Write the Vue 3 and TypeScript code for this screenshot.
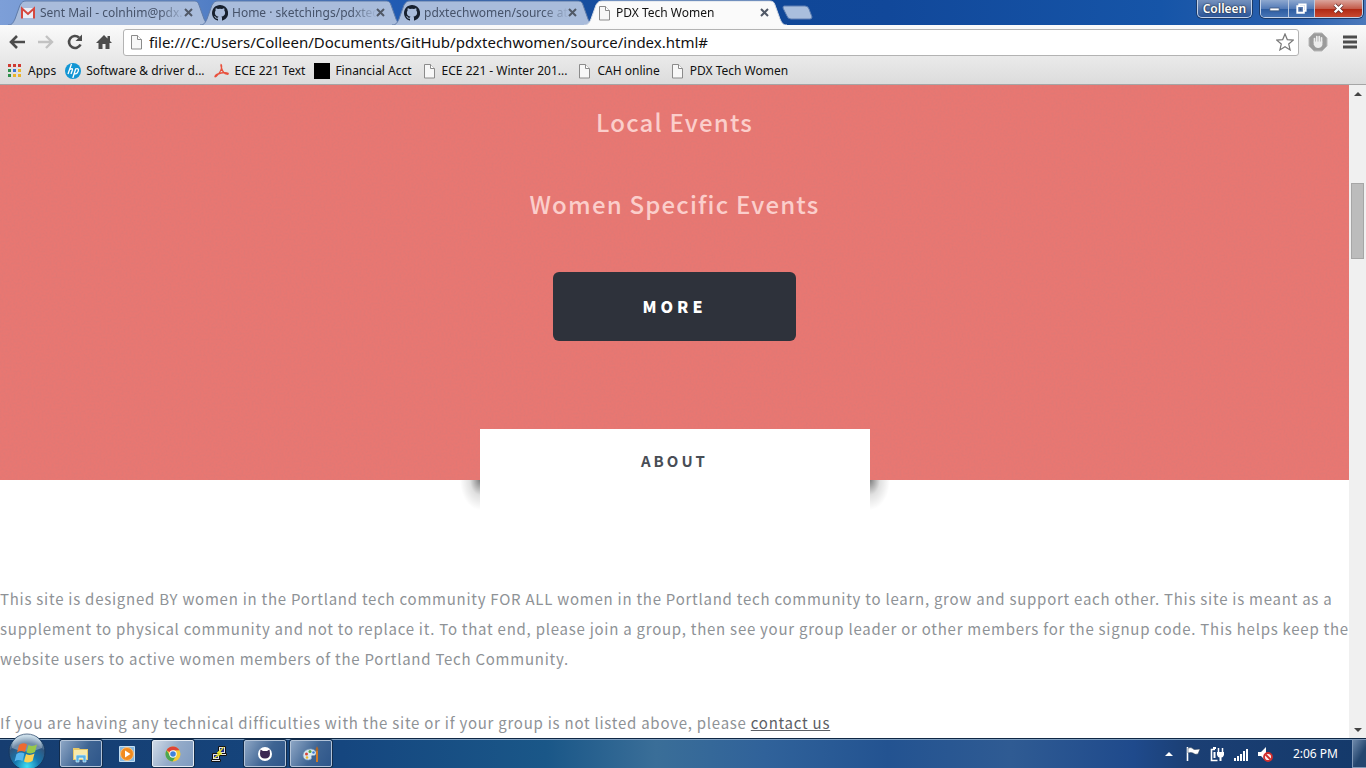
<script setup lang="ts">
import { ref } from 'vue'

interface Tab { title: string; icon: 'gmail' | 'github' | 'page'; active: boolean }
interface Bookmark { title: string; icon: 'apps' | 'hp' | 'pdf' | 'black' | 'page' }
interface Task { name: string; state: 'open' | 'current' | 'pinned' }

const tabs: Tab[] = [
  { title: 'Sent Mail - colnhim@pdx.', icon: 'gmail', active: false },
  { title: 'Home · sketchings/pdxtec', icon: 'github', active: false },
  { title: 'pdxtechwomen/source at', icon: 'github', active: false },
  { title: 'PDX Tech Women', icon: 'page', active: true },
]

const bookmarks: Bookmark[] = [
  { title: 'Apps', icon: 'apps' },
  { title: 'Software & driver d...', icon: 'hp' },
  { title: 'ECE 221 Text', icon: 'pdf' },
  { title: 'Financial Acct', icon: 'black' },
  { title: 'ECE 221 - Winter 201...', icon: 'page' },
  { title: 'CAH online', icon: 'page' },
  { title: 'PDX Tech Women', icon: 'page' },
]

const tasks: Task[] = [
  { name: 'Explorer', state: 'open' },
  { name: 'Media Player', state: 'pinned' },
  { name: 'Chrome', state: 'current' },
  { name: 'PuTTY', state: 'pinned' },
  { name: 'GitHub', state: 'open' },
  { name: 'Paint', state: 'open' },
]

const address = ref('file:///C:/Users/Colleen/Documents/GitHub/pdxtechwomen/source/index.html#')
</script>

<template>
  <div class="desktop">
    <svg class="defs" width="0" height="0" aria-hidden="true">
      <defs>
        <symbol id="page" viewBox="0 0 16 16">
          <path d="M3.5 1.5h6l4 4v9.500h-10z" fill="#f7f7f7" stroke="#8b8b8b" />
          <path d="M9.500 1.500v4h4" fill="#fff" stroke="#8b8b8b" />
        </symbol>
        <symbol id="github" viewBox="0 0 16 16">
          <path fill="#17202e" d="M8 0C3.600 0 0 3.600 0 8c0 3.500 2.300 6.500 5.500 7.600.4.100.5-.2.500-.4v-1.500c-2.200.5-2.700-.9-2.700-.9-.4-.9-.9-1.200-.9-1.200-.7-.5.100-.5.100-.5.800.100 1.200.8 1.200.8.700 1.200 1.900.9 2.300.7.100-.5.300-.9.500-1.100-1.800-.2-3.600-.9-3.600-4 0-.9.300-1.600.8-2.100-.1-.2-.4-1 .1-2.100 0 0 .7-.2 2.200.8a7.600 7.600 0 0 1 4 0c1.500-1 2.200-.8 2.200-.8.400 1.100.2 1.900.1 2.100.5.600.8 1.300.8 2.100 0 3.100-1.900 3.800-3.700 4 .3.300.6.800.6 1.500v2.200c0 .2.100.5.600.4A8 8 0 0 0 8 0z" />
        </symbol>
        <symbol id="gmail" viewBox="0 0 16 16">
          <path d="M2 3h12v10H2z" fill="#e9edf5" />
          <path d="M2 13.500v-10L8 9l6-5.500v10" fill="none" stroke="#d5483f" stroke-width="2" />
        </symbol>
        <symbol id="apps" viewBox="0 0 16 16">
          <path fill="#cf3b32" d="M1 1h3v3H1zM6 1h3v3H6zM11 1h3v3h-3z" />
          <path fill="#2f8f4b" d="M1 6h3v3H1zM1 11h3v3H1z" />
          <path fill="#3a74d8" d="M6 6h3v3H6z" />
          <path fill="#eab42c" d="M11 6h3v3h-3zM6 11h3v3H6zM11 11h3v3h-3z" />
        </symbol>
        <symbol id="hp" viewBox="0 0 16 16">
          <circle cx="8" cy="8" r="8" fill="#1296d4" />
          <path d="M6.500 1 3 11M5 6.500q3-2 2.300.7L6 11M10.800 5.500 7.800 15M10.500 6q4-1.200 2.600 2.500-1.200 3-3.800 2.200" fill="none" stroke="#fff" stroke-width="1.300" />
        </symbol>
        <symbol id="pdf" viewBox="0 0 16 16">
          <path d="M6.500 1.500q1.500 0 1 3.500-.7 4-5.500 8.500-1.200.8-1-.2 1-2 6-3.300 5-1 7 .2.800 1.200-1 1-4-.8-5.500-6.200-.8-3.500-1-3.500z" fill="none" stroke="#e8503c" stroke-width="1.300" />
        </symbol>
        <symbol id="black" viewBox="0 0 16 16"><path d="M0 0h16v16H0z" /></symbol>
      </defs>
    </svg>

    <header class="browser">
      <div class="titlebar">
        <div class="tabs">
          <div v-for="(tab, i) in tabs" :key="i" class="tab" :class="{ active: tab.active }">
            <svg class="tab-shape" viewBox="0 0 203 25" preserveAspectRatio="none" aria-hidden="true">
              <path d="M0 25C4 25 5 23 7 19L12 5C14 2 15 1 18 1H185C189 1 190 2 191 5L196 19C198 23 199 25 203 25" />
            </svg>
            <svg class="icon"><use :href="'#' + tab.icon" /></svg>
            <button class="tab-title">{{ tab.title }}</button>
            <button class="tab-close" aria-label="Close tab">
              <svg viewBox="0 0 9 9"><path d="M1 1l7 7M8 1L1 8" /></svg>
            </button>
          </div>
          <button class="new-tab" aria-label="New tab">
            <svg viewBox="0 0 32 15"><path d="M2 1H23Q26 1 27 4L30 12Q30 14 28 14H9Q6 14 5 11L1 3Q1 1 2 1Z" /></svg>
          </button>
        </div>
        <button class="user">Colleen</button>
        <div class="window-buttons">
          <button aria-label="Minimize"><svg viewBox="0 0 16 16"><path d="M3 7.500h10v3H3z" fill="#fff" stroke="#3b5277" stroke-width=".8" /></svg></button>
          <button aria-label="Restore"><svg viewBox="0 0 16 16"><path d="M5.500 3.500h7v7h-7z" fill="none" stroke="#fff" stroke-width="1.800" /><path d="M3.500 5.500h7v7h-7z" fill="#5677ae" stroke="#fff" stroke-width="2" /><path d="M6 8h2v2H6z" fill="#31507f" /></svg></button>
          <button class="close" aria-label="Close"><svg viewBox="0 0 16 16"><path d="M4 4l8 8M12 4l-8 8" stroke="#5b2626" stroke-width="4" /><path d="M4 4l8 8M12 4l-8 8" stroke="#fff" stroke-width="2.600" /></svg></button>
        </div>
      </div>

      <div class="toolbar">
        <button class="nav" aria-label="Back"><svg viewBox="0 0 18 18"><path d="M17 9H4M9 3 3 9l6 6" stroke="#4c4c4c" stroke-width="2.600" fill="none" /></svg></button>
        <button class="nav" aria-label="Forward"><svg viewBox="0 0 18 18"><path d="M1 9h13M9 3l6 6-6 6" stroke="#c2c2c2" stroke-width="2.400" fill="none" /></svg></button>
        <button class="nav" aria-label="Reload"><svg viewBox="0 0 18 18"><path d="M14.500 11.500A6 6 0 1 1 13 4.500" stroke="#4c4c4c" stroke-width="2.600" fill="none" /><path d="M16 1.500V8H9.500z" fill="#4c4c4c" /></svg></button>
        <button class="nav" aria-label="Home"><svg viewBox="0 0 18 18"><path d="M9 2 1 10h2.500v6h4v-5h3v5h4v-6H17l-2-2V3h-2.500v2.500z" fill="#4c4c4c" /></svg></button>
        <div class="omnibox">
          <svg class="icon"><use href="#page" /></svg>
          <input v-model="address" type="text" aria-label="Address" spellcheck="false" />
          <button class="star" aria-label="Bookmark this page"><svg viewBox="0 0 18 18"><path d="M9 1l2.300 5.600 5.900.5-4.500 3.900 1.400 5.900L9 13.700l-5.100 3.200L5.300 11 .8 7.100l5.900-.5z" fill="#fff" stroke="#777" stroke-width="1.200" /></svg></button>
        </div>
        <button class="ext" aria-label="Ad blocker"><svg viewBox="0 0 20 20"><path d="M6 1h8l5 5v8l-5 5H6l-5-5V6z" fill="#9b9b9b" stroke="#b8b8b8" /><path d="M6.500 10V6.500M8.800 9.500v-5M11.200 9.500v-5M13.500 10V5.800" stroke="#ececec" stroke-width="1.700" stroke-linecap="round" /><path d="M5.700 9.500h8.700v3.500q-1 3-4.300 3-3 0-4.400-3.500z" fill="#ececec" /></svg></button>
        <button class="menu" aria-label="Menu"><svg viewBox="0 0 14 14"><path d="M0 2h14M0 7h14M0 12h14" stroke="#4c4c4c" stroke-width="3" /></svg></button>
      </div>

      <nav class="bookmarks" aria-label="Bookmarks">
        <a v-for="b in bookmarks" :key="b.title" href="#">
          <svg class="icon"><use :href="'#' + b.icon" /></svg>{{ b.title }}
        </a>
      </nav>
    </header>

    <div class="viewport">
      <main class="site">
        <section class="hero">
          <svg class="grain" aria-hidden="true">
            <filter id="noise"><feTurbulence type="fractalNoise" baseFrequency="0.5" numOctaves="2" seed="4" /><feColorMatrix values="0 0 0 0 0.6  0 0 0 0 0.2  0 0 0 0 0.2  3 0 0 0 -1.15" /></filter>
            <rect width="100%" height="100%" filter="url(#noise)" />
          </svg>
          <h2>Local Events</h2>
          <h2>Women Specific Events</h2>
          <button class="more">MORE</button>
        </section>
        <section class="about">
          <h3>ABOUT</h3>
          <p>This site is designed BY women in the Portland tech community FOR ALL women in the Portland tech community to learn, grow and support each other. This site is meant as a supplement to physical community and not to replace it. To that end, please join a group, then see your group leader or other members for the signup code. This helps keep the website users to active women members of the Portland Tech Community.</p>
          <p>If you are having any technical difficulties with the site or if your group is not listed above, please <a href="#">contact us</a></p>
        </section>
      </main>
      <div class="scrollbar">
        <button aria-label="Scroll up"><svg viewBox="0 0 8 4"><path d="M0 4 4 0l4 4z" /></svg></button>
        <div class="track"><div class="thumb"></div></div>
        <button aria-label="Scroll down"><svg viewBox="0 0 8 4"><path d="M0 0l4 4 4-4z" /></svg></button>
      </div>
    </div>

    <footer class="taskbar">
      <button class="start" aria-label="Start">
        <svg viewBox="0 0 38 38">
          <defs>
            <radialGradient id="orb" cx=".5" cy=".9" r=".85"><stop offset="0" stop-color="#3fe0f5" /><stop offset=".4" stop-color="#1577ae" /><stop offset=".75" stop-color="#31567f" /><stop offset="1" stop-color="#b4cfe0" /></radialGradient>
          </defs>
          <circle cx="19" cy="19" r="18" fill="url(#orb)" stroke="#16385f" />
          <path d="M4 15A15 15 0 0 1 34 15Q19 22 4 15z" fill="#fff" opacity=".32" />
          <path d="M11 12q4-3 8-.5L17 19q-4-2-8 .5z" fill="#ee6a30" />
          <path d="M20.500 12q4 2 8.500-.5L27 19q-4 2.500-8.500.5z" fill="#98c84b" />
          <path d="M8.500 21q4-2.500 8-.5l-2 7.500q-4-2-8 .5z" fill="#57b5ee" />
          <path d="M18 21q4 2 8.500-.5l-2 7.500q-4 2.500-8.500.5z" fill="#fbd154" />
        </svg>
      </button>
      <div class="tasks">
        <button v-for="t in tasks" :key="t.name" class="task" :class="t.state" :aria-label="t.name">
          <svg v-if="t.name === 'Explorer'" viewBox="0 0 18 18"><path d="M1 3h6l1 1h8v11H1z" fill="#e8c968" /><path d="M2 5h13v9H2z" fill="#f9eaaa" /><path d="M4 17v-6q0-1 1-1h8q1 0 1 1v6h-3v-4H7v4z" fill="#5cb5e6" stroke="#d2edf9" stroke-width=".7" /></svg>
          <svg v-else-if="t.name === 'Media Player'" viewBox="0 0 18 18"><path d="M1.500 1.500h15v15h-15z" fill="#86b9e2" stroke="#c3def2" /><circle cx="9" cy="9" r="6.500" fill="#f28b1e" stroke="#fbc27e" /><path d="M7 5.500v7l5.500-3.500z" fill="#fff" /></svg>
          <svg v-else-if="t.name === 'Chrome'" viewBox="0 0 18 18"><circle cx="9" cy="9" r="7.500" fill="#f5ca35" /><path d="M9 9 2.500 5.200A7.500 7.500 0 0 1 15.500 5.300L9 5.500z" fill="#dd4437" /><path d="M2.500 5.200A7.500 7.500 0 0 0 8.500 16.500L12 11 9 9 6 10.500z" fill="#4ba553" /><circle cx="9" cy="9" r="3.700" fill="#fff" /><circle cx="9" cy="9" r="2.800" fill="#3f82dc" /></svg>
          <svg v-else-if="t.name === 'PuTTY'" viewBox="0 0 18 18"><path d="M8.500 1.500h7v7h-7zM2.500 8.500h7v6h-7z" fill="#e4e4e4" stroke="#111" /><path d="M10 3h4v4h-4zM4 10h4v3H4z" fill="#1f2b91" /><path d="M1.500 14.500h9v2h-9zM8.500 8.500h8v2h-8z" fill="#e8e8e8" stroke="#111" /><path d="M14 2 7 8l2.500.5L4 13l8-4.500-2.500-1z" fill="#fff33b" stroke="#d8d82a" /></svg>
          <svg v-else-if="t.name === 'GitHub'" viewBox="0 0 18 18"><circle cx="9" cy="9" r="7" fill="#fff" /><path d="M4.500 4.500 7 6h4l2.500-1.500.5 4q0 5-5 5t-5-5z" fill="#3b2753" /></svg>
          <svg v-else viewBox="0 0 18 18"><path d="M1 10q1-6 8-6 6 1 5 5-1 2-4 1.500-1 0-.5 2t-3 2.500Q1 15 1 10z" fill="#d9e8f2" stroke="#7e9fb9" stroke-width=".7" /><circle cx="4.500" cy="9" r="1.500" fill="#d8483b" /><circle cx="8" cy="6.500" r="1.500" fill="#58a845" /><circle cx="11.500" cy="7.500" r="1.300" fill="#3d7bd6" /><circle cx="5" cy="12.500" r="1.300" fill="#ecb72a" /><path d="M15 6v11" stroke="#cf7a24" stroke-width="2" /><path d="M14 6q-1-2 1-5 2 3 1 5z" fill="#a9672e" /></svg>
        </button>
      </div>
      <div class="tray">
        <button aria-label="Show hidden icons"><svg viewBox="0 0 16 16"><path d="M4 10l4-4 4 4z" fill="#fff" /></svg></button>
        <button aria-label="Action Center"><svg viewBox="0 0 16 16"><path d="M2.500 1v14" stroke="#fff" stroke-width="1.600" /><path d="M3 2q3-1 5 .5 0 1 2 1l5-.5-2 5q-3 1-5-1-2-1-5 0z" fill="#fff" stroke="#23374f" stroke-width=".5" /></svg></button>
        <button aria-label="Power"><svg viewBox="0 0 16 16"><path d="M6 3.500H2.500v11h6" fill="none" stroke="#fff" stroke-width="1.600" /><path d="M4 1h3v2H4zM4.500 6h2v6h-2z" fill="#fff" /><path d="M9.500 2v4M13.500 2v4" stroke="#fff" stroke-width="1.500" /><path d="M8 6h7v3q-1 2.500-2.500 2.500V15h-2v-3.500Q9 11.500 8 9z" fill="#fff" /></svg></button>
        <button aria-label="Network"><svg viewBox="0 0 16 16"><path d="M1 12h2v3H1zM4 10h2v5H4zM7 8h2v7H7zM10 5h2v10h-2zM13 3h2v12h-2z" fill="#fff" /></svg></button>
        <button aria-label="Volume"><svg viewBox="0 0 16 16"><path d="M1 6h3l5-5v14l-5-5H1z" fill="#fff" /><circle cx="11" cy="11" r="4" fill="#fbe9e9" stroke="#d02d2d" stroke-width="1.800" /><path d="M8.500 8.500l5 5" stroke="#d02d2d" stroke-width="1.800" /></svg></button>
      </div>
      <time class="clock">2:06 PM</time>
      <button class="peek" aria-label="Show desktop"></button>
    </footer>
  </div>
</template>

<style>
html, body { margin: 0; overflow: hidden; }
</style>

<style scoped>
.desktop { height: 100vh; display: flex; flex-direction: column; font: 12px "Noto Sans", "Open Sans", sans-serif; color: #111; background: #fff; }
.defs { position: absolute; }
button { padding: 0; border: 0; background: none; font: inherit; color: inherit; }
svg { display: block; flex: none; }
.icon { width: 16px; height: 16px; }

.browser { flex: none; border-bottom: 1px solid #a5a5a5; background: linear-gradient(#fafafa 25px, #dcdcdc); }
.titlebar { height: 25px; display: flex; align-items: flex-start; background: linear-gradient(90deg, #7d9fd8 0, #6d92cf 8%, #225cb4 28%, #0f4695 50%, #11489a 65%, #1655a8 85%, #2a60ae 95%, #4c79bb); }
.tabs { flex: 1; display: flex; align-items: flex-start; padding-left: 8px; min-width: 0; }
.tab { position: relative; width: 203px; height: 25px; box-sizing: border-box; margin-right: -11px; padding: 0 18px 0 12px; display: flex; align-items: center; color: #46536a; }
.tab.active { z-index: 1; color: #111; }
.tab-shape { position: absolute; inset: 0; width: 100%; height: 25px; }
.tab-shape path { fill: #a9bcdb; stroke: #5f7ba8; stroke-width: 1; }
.tab.active .tab-shape path { fill: #fafafa; stroke: #d2d9e4; }
.tab .icon, .tab button { position: relative; }
.tab-title { flex: 1; min-width: 0; margin-right: -6px; padding-left: 4px; overflow: hidden; white-space: nowrap; text-align: left; line-height: 20px; mask-image: linear-gradient(90deg, #000 80%, transparent 97%); }
.tab-close svg { width: 9px; height: 9px; fill: none; stroke: #505866; stroke-width: 2; }
.new-tab { margin: 5px 0 0 6px; }
.new-tab svg { width: 32px; height: 15px; fill: #a9bedd; stroke: #5e7fb3; }
.user { width: 55px; height: 18px; box-sizing: border-box; margin-right: 8px; border: 1px solid #c4d2e8; border-top: 0; border-radius: 0 0 5px 5px; box-shadow: 0 0 0 1px #1b3a68; background: linear-gradient(#7591bd, #2b5598); color: #fff; font-weight: 600; line-height: 16px; text-shadow: 0 0 2px #000; }
.window-buttons { display: flex; margin-right: 3px; height: 17px; border: 1px solid #c4d2e8; border-top: 0; border-radius: 0 0 5px 5px; box-shadow: 0 0 0 1px #1b3a68; overflow: hidden; }
.window-buttons button { width: 28px; border-right: 1px solid #b9c8df; background: linear-gradient(#8ea8cf, #547bb7 50%, #2b5a9f 51%, #4674b5); display: grid; place-items: center; }
.window-buttons button:nth-child(2) { width: 26px; }
.window-buttons .close { width: 47px; border: 0; background: linear-gradient(#dba59c, #c45c4b 50%, #ae2712 51%, #c8492f); }
.window-buttons svg { width: 15px; height: 15px; }

.toolbar { height: 34px; display: flex; align-items: center; padding: 0 9px 0 8px; }
.nav { width: 29px; }
.nav svg { width: 18px; height: 18px; }
.nav:nth-child(4) { width: 28px; }
.omnibox { flex: 1; height: 27px; box-sizing: border-box; display: flex; align-items: center; padding: 0 4px; border: 1px solid #b3b3b3; border-radius: 3px; background: #fff; }
.omnibox input { flex: 1; min-width: 0; border: 0; outline: 0; padding: 0 0 0 5px; background: none; font: 15px "Noto Sans", "Open Sans", sans-serif; color: #111; }
.star svg { width: 18px; height: 18px; }
.ext { margin: 0 15px 0 9px; }
.ext svg { width: 20px; height: 20px; }
.menu svg { width: 14px; height: 14px; }

.bookmarks { height: 23px; padding: 0 6px 2px 7px; display: flex; align-items: center; gap: 9px; white-space: nowrap; }
.bookmarks a { display: flex; align-items: center; gap: 5px; color: #111; text-decoration: none; line-height: 16px; }

.viewport { flex: 1; min-height: 0; display: flex; overflow: hidden; }
.site { flex: 1; min-width: 0; overflow: hidden; font-family: "Noto Sans CJK SC", sans-serif; }
.hero { position: relative; box-sizing: border-box; height: 395px; display: flex; flex-direction: column; align-items: center; background: #e87772; }
.grain { position: absolute; inset: 0; width: 100%; height: 100%; opacity: .2; }
.hero h2, .more { position: relative; }
.hero h2 { margin: 17px 0 42px; font-size: 24px; line-height: 40px; font-weight: 500; letter-spacing: .05em; color: #fbcecb; }
.hero h2 + h2 { margin: 0 0 48px; }
.more { width: 243px; height: 69px; padding-bottom: 2px; border-radius: 6px; background: #2e323b; color: #fff; font-size: 16px; font-weight: 900; letter-spacing: 4px; }
.about { position: relative; color: #8e9296; font-size: 15px; line-height: 30px; }
.about h3 { position: relative; width: 390px; height: 84px; margin: -51px auto 71px; background: #fff; text-align: center; font-size: 15px; line-height: 64px; letter-spacing: 3px; color: #484d55; }
.about h3::before, .about h3::after { content: ""; position: absolute; top: 51px; width: 20px; height: 30px; }
.about h3::before { right: 100%; background: radial-gradient(20px 30px at 100% 0, rgba(0, 0, 0, .5), rgba(0, 0, 0, .12) 50%, transparent); }
.about h3::after { left: 100%; background: radial-gradient(20px 30px at 0 0, rgba(0, 0, 0, .5), rgba(0, 0, 0, .12) 50%, transparent); }
.about p { margin: 0 0 34px; letter-spacing: .05em; }
.about a { color: #5c6066; }

.scrollbar { width: 17px; display: flex; flex-direction: column; background: #f0f0f0; }
.scrollbar button { height: 17px; display: grid; place-items: center; }
.scrollbar svg { width: 8px; height: 4px; fill: #444; }
.track { flex: 1; padding: 81px 2px 0; }
.thumb { height: 74px; border: 1px solid #a6a6a6; background: #bcbcbc; }

.taskbar { flex: none; height: 30px; box-sizing: border-box; display: flex; align-items: stretch; border-top: 1px solid #0e2744; box-shadow: inset 0 1px #7f9fc0; background: linear-gradient(90deg, #163d70, #15467f 25%, #1a5788 40%, #3a6e98 48%, #30629a 56%, #235391 65%, #2f5b93 74%, #1f4a8c 83%, #1b3f74 87%, #14396a); }
.start { position: relative; width: 38px; height: 38px; margin: -6px 14px 0 8px; }
.start svg { width: 38px; height: 38px; }
.tasks { flex: 1; display: flex; gap: 4px; padding-top: 1px; }
.task { width: 42px; height: 27px; box-sizing: border-box; display: grid; place-items: center; border: 1px solid transparent; border-radius: 2px; }
.task svg { width: 18px; height: 18px; }
.task.open { border-color: #b3c4d9; box-shadow: 0 0 0 1px #122c4c; background: linear-gradient(120deg, #8da6c5, #3e6493 55%, #2e568a); }
.task.current { border-color: #e4ebf3; box-shadow: 0 0 0 1px #122c4c; background: linear-gradient(120deg, #d0dae6, #94abc9 50%, #7f9bc0); }
.tray { display: flex; align-items: center; gap: 8px; }
.tray svg { width: 16px; height: 16px; }
.clock { align-self: center; margin: 0 14px 0 20px; color: #fff; line-height: 16px; }
.peek { width: 14px; border: 1px solid #7f98b8; border-right: 0; background: linear-gradient(120deg, #6d88aa, #24466f 60%); }
</style>
